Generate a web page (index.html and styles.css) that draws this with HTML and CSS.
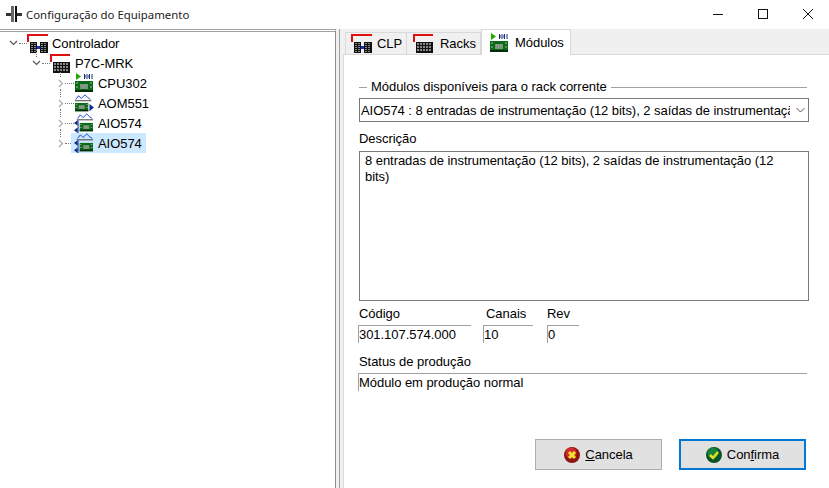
FILE: index.html
```html
<!DOCTYPE html>
<html lang="pt">
<head>
<meta charset="UTF-8">
<title>Configuração do Equipamento</title>
<link rel="stylesheet" href="styles.css">
</head>
<body>
<svg class="defs" width="0" height="0">
  <symbol id="icoClp" viewBox="0 0 21 19">
    <path d="M0 0h21v2H2v6H0z" fill="#e01010"/>
    <rect x="3" y="8" width="7" height="11" fill="#111"/>
    <rect x="13" y="8" width="8" height="11" fill="#111"/>
    <path d="M5 9v9M8 9v9M15 9v9M18 9v9" stroke="#fff" stroke-dasharray="1 1"/>
    <rect x="10" y="12" width="3" height="3" fill="#1030d0"/>
  </symbol>
  <symbol id="icoRack" viewBox="0 0 21 19">
    <path d="M0 0h20v2H2v6H0z" fill="#e01010"/>
    <rect x="3" y="8" width="17" height="11" fill="#111"/>
    <path d="M5 9v9M8 9v9M11 9v9M14 9v9M17 9v9" stroke="#fff" stroke-dasharray="2 1"/>
  </symbol>
  <symbol id="icoCard" viewBox="0 0 18 11">
    <rect width="18" height="11" fill="#0a6a18"/>
    <rect y="9" width="18" height="2" fill="#032a0a"/>
    <rect x="5" y="3" width="8" height="5" fill="#7f9180"/>
    <path d="M6 4h1M8 6h1M10 4h1M1 2h2M15 2h2M1 6h2M15 6h2" stroke="#9fc0a0" fill="none"/>
  </symbol>
  <symbol id="icoCpu" viewBox="0 0 20 20">
    <path d="M2 0v7l5-3.500z" fill="#22a800"/>
    <path d="M10.500 1v5M13 1v1M13 5v1M15.500 1v5M12 2v3M14 2v3M18 1v5" stroke="#123070" fill="none"/>
    <use href="#icoCard" x="1" y="8" width="18" height="11"/>
  </symbol>
  <symbol id="icoAom" viewBox="0 0 22 20">
    <path d="M2 6l3-4 3 3 4-4 3 3 3 2" stroke="#1030d0" fill="none"/>
    <path d="M1 7.500h18" stroke="#333"/>
    <use href="#icoCard" x="1" y="9" width="15" height="11"/>
    <path d="M17 11l5 4-5 4z" fill="#0c2a90"/>
  </symbol>
  <symbol id="icoAio" viewBox="0 0 22 22">
    <path d="M4 6l3-4 3 3 4-4 3 3 3 2" stroke="#1030d0" fill="none"/>
    <path d="M3 7.500h18" stroke="#333"/>
    <path d="M0 11l4-3v6zM0 19l4-3v6z" fill="#0c2a90"/>
    <path d="M4.500 8v14" stroke="#0c2a90"/>
    <use href="#icoCard" x="6" y="10" width="15" height="11"/>
  </symbol>
  <symbol id="icoCancela" viewBox="0 0 16 16">
    <circle cx="8" cy="8" r="8" fill="#8e1414"/>
    <circle cx="7" cy="6" r="5.500" fill="#d02c2c"/>
    <path d="M5 5l6 6M11 5l-6 6" stroke="#f0e030" stroke-width="3"/>
  </symbol>
  <symbol id="icoConfirma" viewBox="0 0 16 16">
    <circle cx="8" cy="8" r="8" fill="#0a5028"/>
    <circle cx="7" cy="6" r="5.500" fill="#14843c"/>
    <path d="M4 8l3 3 5-6" stroke="#e6e020" stroke-width="2.500" fill="none"/>
  </symbol>
</svg>

<div class="titlebar">
  <svg class="app-icon" width="18" height="16" viewBox="0 0 18 16"><path d="M1 7h5v3H1zM12 7h5v3h-5z" fill="#333"/><path d="M6 0h3v16H6z" fill="#666"/><path d="M10 0h2v16h-2z" fill="#111"/></svg>
  <span class="title-text">Configuração do Equipamento</span>
  <div class="win-btns">
    <svg width="12" height="12" viewBox="0 0 12 12"><path d="M1 6.500h10" stroke="#111"/></svg>
    <svg width="12" height="12" viewBox="0 0 12 12"><rect x="1.500" y="1.500" width="9" height="9" fill="none" stroke="#111"/></svg>
    <svg width="12" height="12" viewBox="0 0 12 12"><path d="M1 1l10 10M11 1L1 11" stroke="#111" fill="none"/></svg>
  </div>
</div>

<div class="main">
  <div class="tree">
    <div class="node lvl0">
      <svg class="caret" viewBox="0 0 9 6"><path d="M1 1l3.500 3.500L8 1" fill="none" stroke="#555" stroke-width="1.200"/></svg>
      <i class="dots"></i>
      <svg class="ico" width="21" height="19"><use href="#icoClp"/></svg>
      <span class="lbl">Controlador</span>
    </div>
    <div class="node lvl1">
      <svg class="caret" viewBox="0 0 9 6"><path d="M1 1l3.500 3.500L8 1" fill="none" stroke="#555" stroke-width="1.200"/></svg>
      <i class="dots"></i>
      <svg class="ico" width="21" height="19"><use href="#icoRack"/></svg>
      <span class="lbl">P7C-MRK</span>
    </div>
    <div class="node lvl2">
      <svg class="caret closed" viewBox="0 0 6 9"><path d="M1 1l3.500 3.500L1 8" fill="none" stroke="#aaa" stroke-width="1.200"/></svg>
      <i class="dots"></i>
      <svg class="ico" width="20" height="20"><use href="#icoCpu"/></svg>
      <span class="lbl">CPU302</span>
    </div>
    <div class="node lvl2">
      <svg class="caret closed" viewBox="0 0 6 9"><path d="M1 1l3.500 3.500L1 8" fill="none" stroke="#aaa" stroke-width="1.200"/></svg>
      <i class="dots"></i>
      <svg class="ico" width="20" height="20"><use href="#icoAom"/></svg>
      <span class="lbl">AOM551</span>
    </div>
    <div class="node lvl2">
      <svg class="caret closed" viewBox="0 0 6 9"><path d="M1 1l3.500 3.500L1 8" fill="none" stroke="#aaa" stroke-width="1.200"/></svg>
      <i class="dots"></i>
      <svg class="ico" width="20" height="20"><use href="#icoAio"/></svg>
      <span class="lbl">AIO574</span>
    </div>
    <div class="node lvl2 selected">
      <svg class="caret closed" viewBox="0 0 6 9"><path d="M1 1l3.500 3.500L1 8" fill="none" stroke="#aaa" stroke-width="1.200"/></svg>
      <i class="dots"></i>
      <div class="sel-wrap">
        <svg class="ico" width="20" height="20"><use href="#icoAio"/></svg>
        <span class="lbl">AIO574</span>
      </div>
    </div>
  </div>

  <div class="splitter"></div>

  <div class="right">
    <div class="tabs">
      <div class="tab tab-clp"><svg width="21" height="19"><use href="#icoClp"/></svg>CLP</div>
      <div class="tab tab-racks"><svg width="21" height="19"><use href="#icoRack"/></svg>Racks</div>
      <div class="tab active"><svg width="20" height="20"><use href="#icoCpu"/></svg>Módulos</div>
    </div>
    <div class="page">
      <div class="legend"><i class="rule short"></i><span>Módulos disponíveis para o rack corrente</span><i class="rule"></i></div>
      <div class="combo">
        <span class="combo-text">AIO574 : 8 entradas de instrumentação (12 bits), 2 saídas de instrumentação (12 bits)</span>
        <svg width="9" height="6" viewBox="0 0 9 6"><path d="M.5 1l4 4 4-4" fill="none" stroke="#555"/></svg>
      </div>
      <div class="lb desc-lb">Descrição</div>
      <div class="memo">8 entradas de instrumentação (12 bits), 2 saídas de instrumentação (12 bits)</div>
      <div class="fields">
        <div class="field f-cod"><div class="lb">Código</div><div class="val">301.107.574.000</div></div>
        <div class="field f-can"><div class="lb">Canais</div><div class="val">10</div></div>
        <div class="field f-rev"><div class="lb">Rev</div><div class="val">0</div></div>
      </div>
      <div class="field f-status"><div class="lb">Status de produção</div><div class="val">Módulo em produção normal</div></div>
      <div class="buttons">
        <button class="btn"><svg width="16" height="16"><use href="#icoCancela"/></svg><span><u>C</u>ancela</span></button>
        <button class="btn default"><svg width="16" height="16"><use href="#icoConfirma"/></svg><span>Con<u>f</u>irma</span></button>
      </div>
    </div>
  </div>
</div>
</body>
</html>
```
FILE: styles.css
```css
* {
  box-sizing: border-box;
}
html, body {
  margin: 0;
  height: 488px;
  overflow: hidden;
}
body {
  font-family: "Liberation Sans", Arial, sans-serif;
  font-size: 13px;
  letter-spacing: -0.05px;
  color: #000;
  background-color: #fff;
  display: flex;
  flex-direction: column;
}
.defs {
  position: absolute;
}
.titlebar {
  height: 29px;
  flex: none;
  display: flex;
  align-items: center;
  padding-left: 5px;
  padding-bottom: 1px;
  background-color: #fff;
}
.app-icon {
  margin-right: 3px;
}
.title-text {
  font-family: "Noto Sans", sans-serif;
  font-size: 11.4px;
  letter-spacing: 0;
  color: #222;
}
.win-btns {
  margin-left: auto;
  margin-top: -1px;
  display: flex;
  gap: 33px;
  padding-right: 15px;
}
.main {
  flex: 1;
  display: flex;
  min-height: 0;
}
.tree {
  width: 336px;
  flex: none;
  padding-top: 1px;
  border-top: 3px double #a0a0a0;
  border-right: 1px solid #8c8c8c;
}
.node {
  height: 20px;
  display: flex;
  align-items: center;
  position: relative;
}
.lvl0 { padding-left: 9px; }
.lvl1 { padding-left: 32px; }
.lvl2 { padding-left: 57px; }
.lvl1::before, .lvl2::before {
  content: "";
  position: absolute;
  top: -4px;
  height: 8px;
  border-left: 1px dotted #777;
}
.lvl1::before { left: 36px; }
.lvl2::before { left: 60px; }
.caret {
  width: 9px;
  height: 6px;
  flex: none;
}
.caret.closed {
  width: 6px;
  height: 9px;
  margin-left: 1px;
}
.dots {
  width: 8px;
  margin-left: 1px;
  border-top: 1px dotted #777;
  flex: none;
}
.lvl2 .dots {
  width: 9px;
}
.lvl2.selected .dots {
  width: 6px;
}
.ico {
  flex: none;
}
.lbl {
  margin-left: 4px;
}
.sel-wrap {
  display: flex;
  align-items: center;
  background-color: #cce8ff;
  padding: 0 4px 0 3px;
  height: 20px;
}
.splitter {
  width: 4px;
  flex: none;
  background-color: #f0f0f0;
  border-right: 1px solid #a0a0a0;
}
.right {
  flex: 1;
  min-width: 0;
  display: flex;
  flex-direction: column;
  background-color: #f0f0f0;
  padding-left: 3px;
}
.tabs {
  height: 25px;
  flex: none;
  display: flex;
  align-items: flex-end;
  padding-left: 2px;
}
.tab {
  height: 22px;
  display: flex;
  align-items: center;
  background-color: #f0f0f0;
  border: 1px solid #d9d9d9;
  border-bottom: none;
}
.tab-clp {
  width: 62px;
  padding-left: 5px;
  gap: 5px;
}
.tab-racks {
  width: 74px;
  padding-left: 6px;
  gap: 6px;
  border-left: none;
}
.tab.active {
  width: 90px;
  height: 26px;
  padding-left: 7px;
  gap: 6px;
  background-color: #fff;
  margin-bottom: -1px;
  position: relative;
}
.page {
  flex: 1;
  background-color: #fff;
  border-top: 1px solid #d9d9d9;
  border-left: 1px solid #d9d9d9;
  padding: 24px 20px 0 15px;
  display: flex;
  flex-direction: column;
}
.legend {
  display: flex;
  align-items: center;
  gap: 4px;
  height: 16px;
  padding-right: 2px;
}
.rule {
  flex: 1;
  border-top: 1px solid #a0a0a0;
}
.rule.short {
  flex: none;
  width: 8px;
}
.combo {
  margin-top: 3px;
  height: 24px;
  border: 1px solid #7a7a7a;
  display: flex;
  align-items: center;
  padding: 0 3px 0 1px;
  gap: 6px;
}
.combo-text {
  flex: 1;
  white-space: nowrap;
  overflow: hidden;
}
.legend span {
  line-height: 16px;
}
.lb {
  height: 16px;
  line-height: 18px;
}
.desc-lb {
  margin-top: 8px;
}
.memo {
  margin-top: 5px;
  height: 150px;
  border: 1px solid #7a7a7a;
  padding: 1px 8px 0 5px;
  line-height: 16px;
}
.fields {
  display: flex;
  margin-top: 4px;
}
.f-cod { width: 124px; }
.f-can { width: 64px; }
.f-rev { width: 32px; }
.f-can .lb { padding-left: 3px; }
.val {
  margin-top: 4px;
  height: 18px;
  line-height: 17px;
  border-top: 1px solid #a0a0a0;
  border-left: 1px solid #a0a0a0;
}
.f-cod .val { width: 113px; margin-left: -1px; }
.f-can .val { width: 50px; }
.f-rev .val { width: 32px; }
.f-status {
  margin-top: 10px;
  padding-right: 2px;
}
.f-status .val {
  margin-left: -1px;
}
.buttons {
  margin-top: 48px;
  display: flex;
  justify-content: flex-end;
  gap: 17px;
  padding-right: 3px;
}
.btn {
  width: 127px;
  height: 31px;
  background-color: #e1e1e1;
  border: 1px solid #adadad;
  display: flex;
  align-items: center;
  justify-content: center;
  gap: 5px;
  font: inherit;
  letter-spacing: inherit;
  padding: 0;
}
.btn.default {
  border: 2px solid #0078d7;
}
```
